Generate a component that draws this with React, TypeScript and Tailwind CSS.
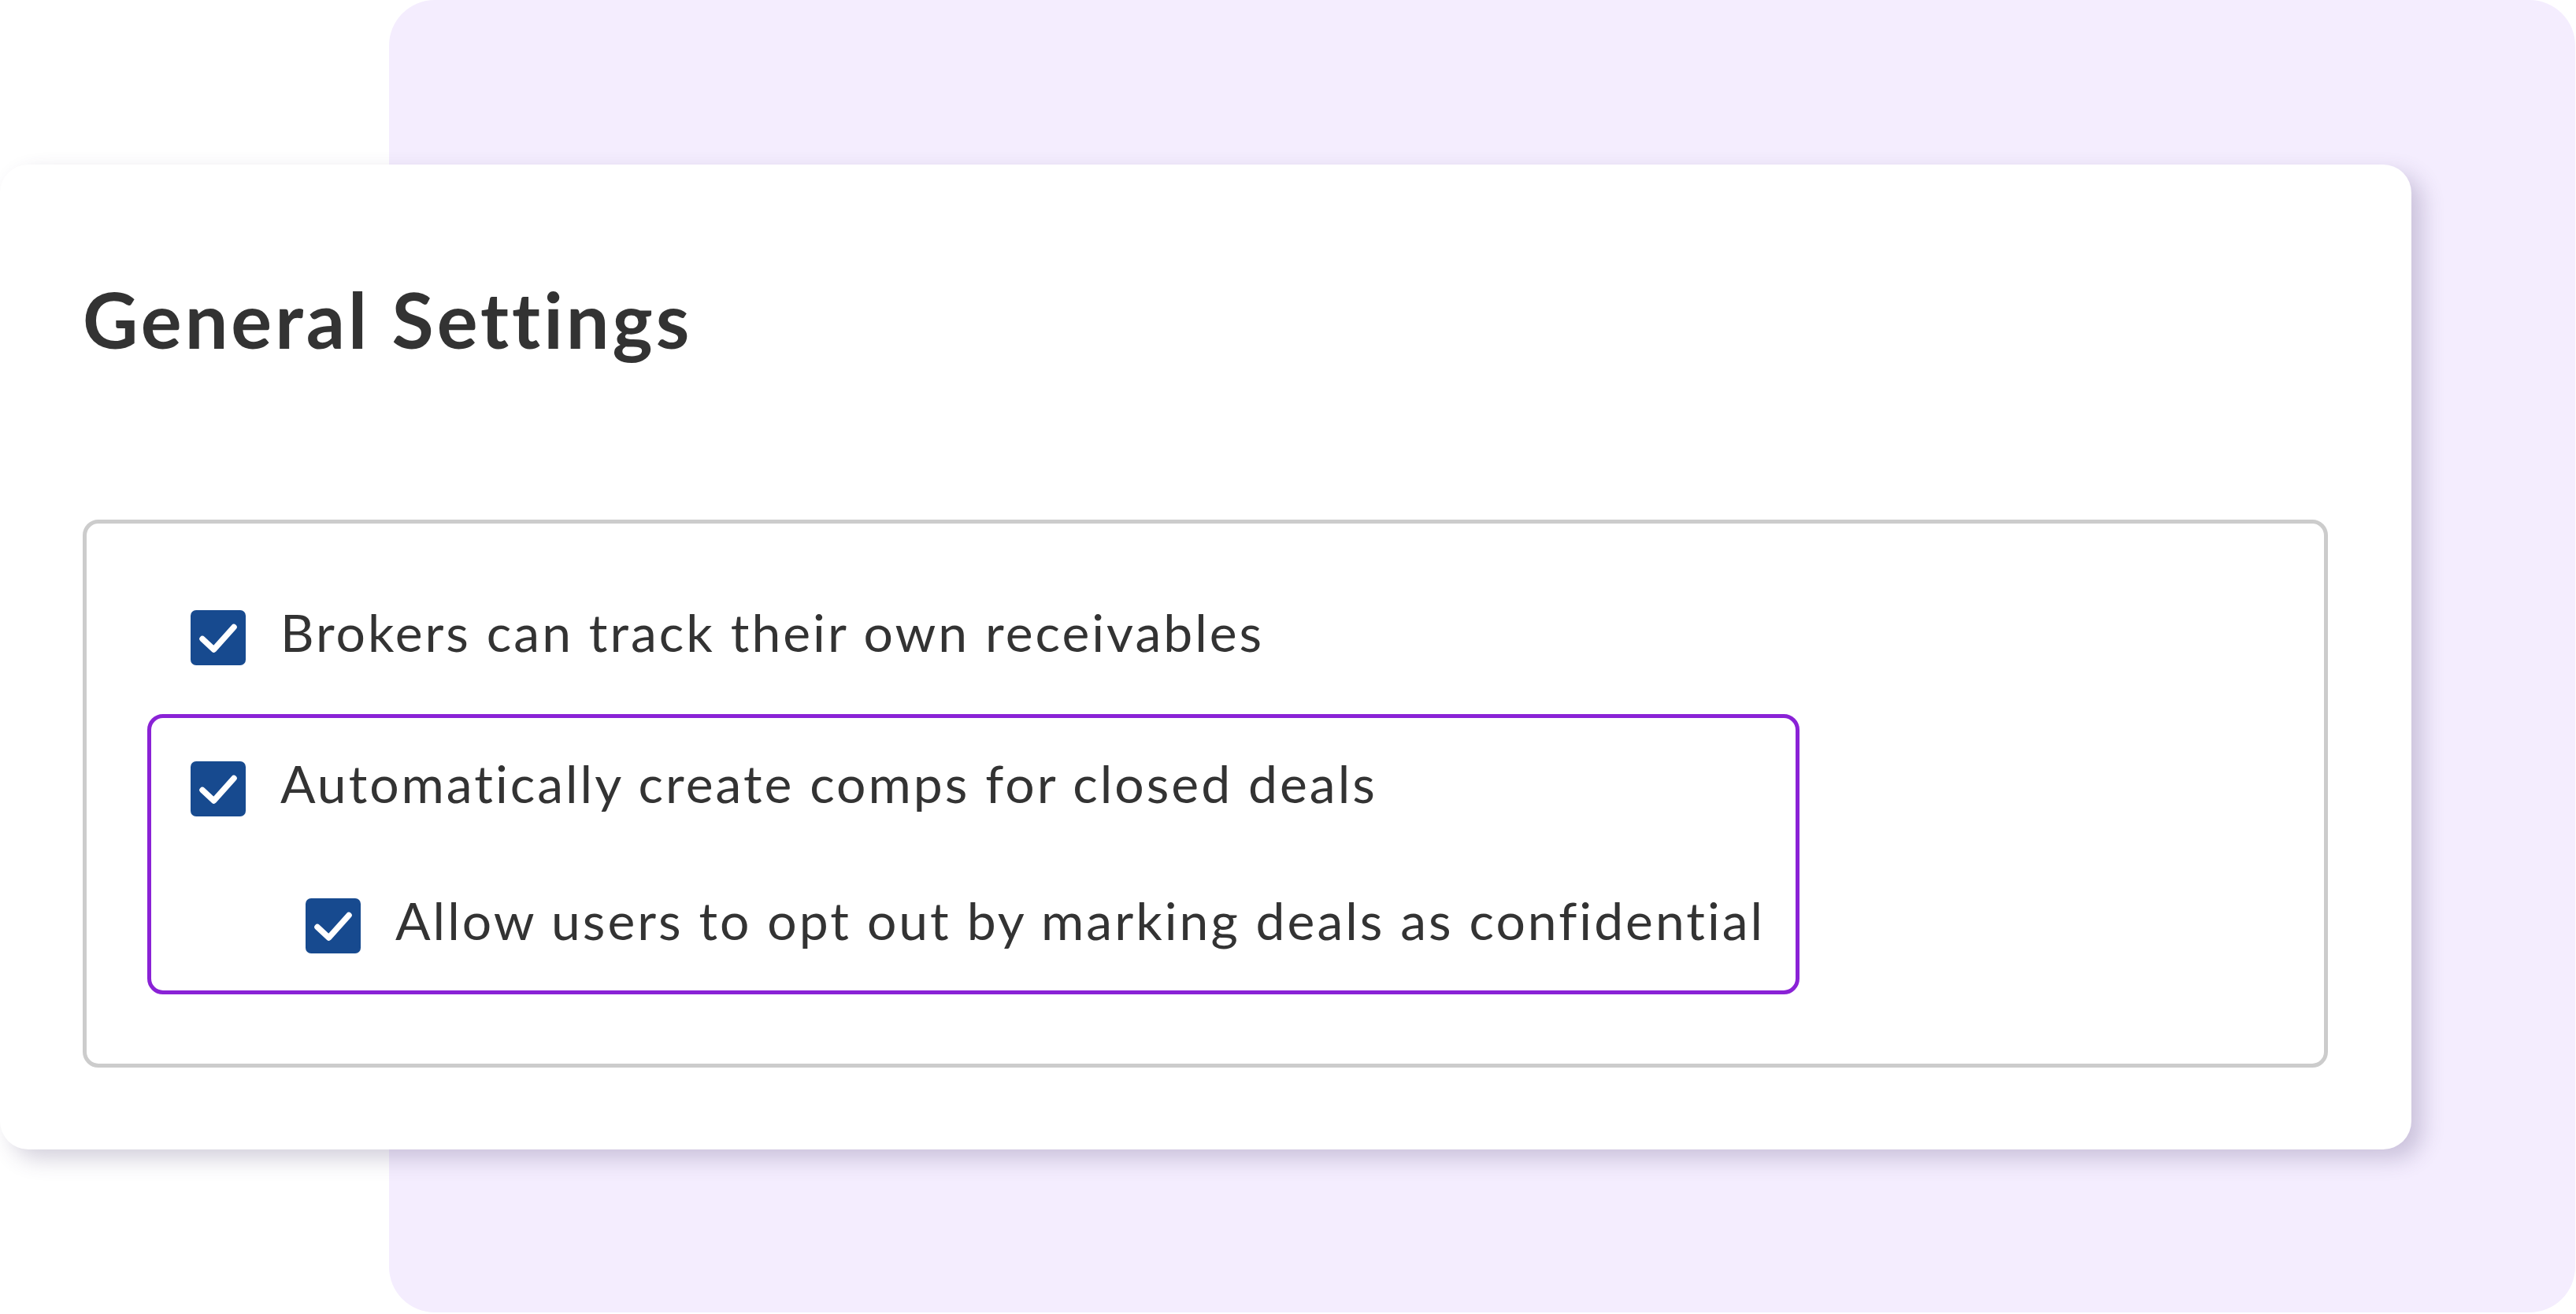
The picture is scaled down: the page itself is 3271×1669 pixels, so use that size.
import React from 'react';

const Check = () => (
  <span className="flex h-[70px] w-[70px] shrink-0 items-center justify-center rounded-[7px] bg-[#174a8f]">
    <svg viewBox="0 0 70 70" className="h-[70px] w-[70px]" fill="none">
      <path d="M15 36.5 L29.5 50 L55 21.5" stroke="#fff" strokeWidth="7.5" strokeLinecap="round" strokeLinejoin="round" />
    </svg>
  </span>
);

const Option = ({ label, className = '' }: { label: string; className?: string }) => (
  <div className={`flex items-center gap-[44px] ${className}`}>
    <Check />
    <span className="text-[66px] leading-none tracking-[3px] text-[#333333] -mt-[14px]">{label}</span>
  </div>
);

const App = () => {
  return (
    <div className="relative h-[1669px] w-[3271px] overflow-hidden bg-white font-['Lato',_'Noto_Sans',_sans-serif]">
      {/* lilac backdrop */}
      <div className="ml-[494px] h-[1667px] w-[2776px] rounded-[58px] bg-[#f4edfe]" />

      {/* settings card */}
      <div className="absolute left-0 top-[209px] h-[1251px] w-[3062px] rounded-[36px] bg-white pl-[105px] pt-[148px] shadow-[14px_12px_28px_rgba(70,60,110,0.24)]">
        <h1 className="text-[97px] font-bold leading-none tracking-[4px] text-[#333333]">General Settings</h1>

        <div className="mt-[206px] h-[696px] w-[2851px] rounded-[20px] border-[5px] border-[#cccccc] pl-[77px] pt-[110px]">
          <Option label="Brokers can track their own receivables" className="pl-[55px]" />

          <div className="mt-[62px] h-[356px] w-[2098px] rounded-[20px] border-[5px] border-[#8a22d6] pl-[50px] pt-[55px]">
            <Option label="Automatically create comps for closed deals" />
            <Option label="Allow users to opt out by marking deals as confidential" className="mt-[104px] pl-[146px]" />
          </div>
        </div>
      </div>
    </div>
  );
};

export default App;
